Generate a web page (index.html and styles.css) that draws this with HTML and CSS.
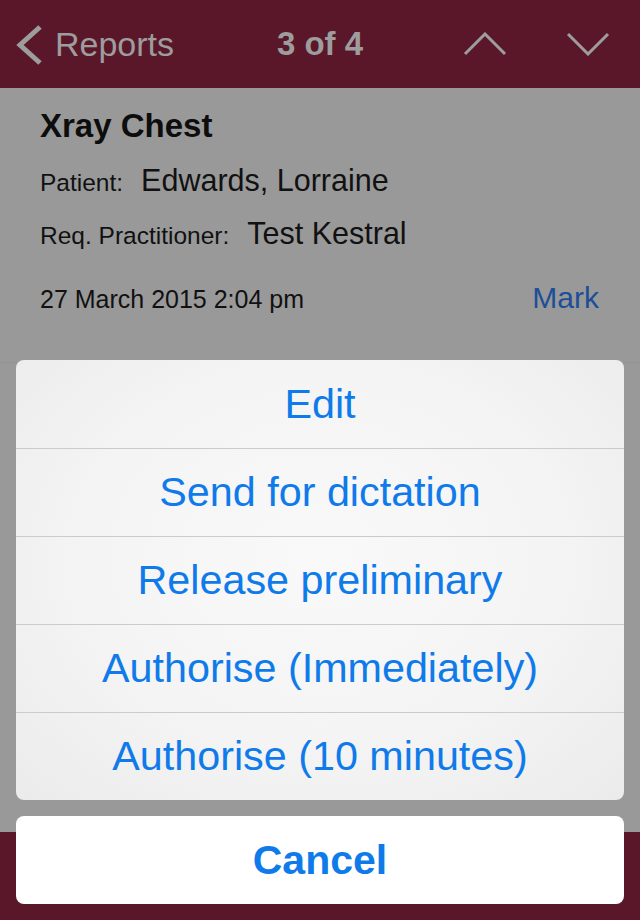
FILE: index.html
```html
<!DOCTYPE html>
<html lang="en">
<head>
    <meta charset="UTF-8">
    <meta name="viewport" content="width=device-width, initial-scale=1.0">
    <title>Reports</title>
    <link rel="stylesheet" href="styles.css">
</head>
<body>
    <div class="screen">
        <header class="navbar">
            <div class="nav-left">
                <svg class="back-icon" width="30" height="42" viewBox="0 0 30 42">
                    <path d="M26 3 L6 21 L26 39" />
                </svg>
                <span class="back-label">Reports</span>
            </div>
            <div class="nav-title">3 of 4</div>
            <div class="nav-right">
                <svg class="arrow" width="44" height="24" viewBox="0 0 44 24">
                    <path d="M2 22 L22 2 L42 22" />
                </svg>
                <svg class="arrow" width="44" height="24" viewBox="0 0 44 24">
                    <path d="M2 2 L22 22 L42 2" />
                </svg>
            </div>
        </header>

        <main class="content">
            <section class="details">
                <h1 class="study">Xray Chest</h1>
                <div class="field first">
                    <span class="label">Patient:</span>
                    <span class="value">Edwards, Lorraine</span>
                </div>
                <div class="field">
                    <span class="label">Req. Practitioner:</span>
                    <span class="value">Test Kestral</span>
                </div>
                <div class="meta">
                    <span class="date">27 March 2015 2:04 pm</span>
                    <span class="mark">Mark</span>
                </div>
            </section>
        </main>

        <footer class="toolbar"></footer>

        <div class="action-sheet">
            <ul class="actions">
                <li>Edit</li>
                <li>Send for dictation</li>
                <li>Release preliminary</li>
                <li>Authorise (Immediately)</li>
                <li>Authorise (10 minutes)</li>
            </ul>
            <button class="cancel">Cancel</button>
        </div>
    </div>
</body>
</html>
```

FILE: styles.css
```css
html, body {
    margin: 0;
    padding: 0;
}

body {
    font-family: "Liberation Sans", Arial, sans-serif;
    background: #999999;
    color: #111;
}

.screen {
    position: relative;
    width: 640px;
    height: 920px;
    display: flex;
    flex-direction: column;
    overflow: hidden;
}

/* top bar */
.navbar {
    height: 88px;
    flex-shrink: 0;
    background: #5a172a;
    display: grid;
    grid-template-columns: 1fr auto 1fr;
    align-items: center;
    color: #9d9d9d;
}

.nav-left {
    display: flex;
    align-items: center;
    padding-left: 14px;
}

.back-icon {
    margin-top: 2px;
}

.back-icon path,
.arrow path {
    fill: none;
    stroke: #9d9d9d;
}

.back-icon path {
    stroke-width: 5;
}

.arrow path {
    stroke-width: 3;
}

.back-label {
    margin-left: 11px;
    font-size: 34px;
}

.nav-title {
    font-size: 33px;
    font-weight: bold;
}

.nav-right {
    display: flex;
    justify-content: flex-end;
    align-items: center;
    gap: 59px;
    padding-right: 30px;
}

/* report body */
.content {
    flex: 1;
    background: #999999;
}

.details {
    box-sizing: border-box;
    height: 275px;
    padding: 18px 41px 0 40px;
    border-bottom: 1px solid #939393;
}

.study {
    margin: 0;
    font-size: 33px;
    line-height: 40px;
    font-weight: bold;
    color: #0d0d0d;
}

.field {
    display: flex;
    align-items: baseline;
    gap: 18px;
    margin-top: 10px;
    line-height: 40px;
}

.field.first {
    margin-top: 14px;
}

.label {
    font-size: 24.5px;
}

.value {
    font-size: 30.5px;
}

.meta {
    display: flex;
    justify-content: space-between;
    align-items: baseline;
    margin-top: 22px;
    line-height: 40px;
}

.date {
    font-size: 25px;
}

.mark {
    font-size: 30px;
    color: #1c4f98;
}

.toolbar {
    height: 88px;
    flex-shrink: 0;
    background: #5a172a;
}

/* action sheet */
.action-sheet {
    position: absolute;
    left: 16px;
    right: 16px;
    bottom: 16px;
    display: flex;
    flex-direction: column;
    gap: 16px;
}

.actions {
    list-style: none;
    margin: 0;
    padding: 0;
    border-radius: 8px;
    overflow: hidden;
    background: radial-gradient(ellipse at 50% 45%, #f9f9f9 0%, #f4f4f4 55%, #ecebeb 100%);
}

.actions li,
.cancel {
    box-sizing: border-box;
    height: 88px;
    display: flex;
    align-items: center;
    justify-content: center;
    font-size: 41.3px;
    color: #0f7bea;
}

.actions li + li {
    border-top: 1px solid #cbcbcb;
}

.cancel {
    width: 100%;
    border: none;
    border-radius: 8px;
    background: #fff;
    font-family: inherit;
    font-size: 41px;
    font-weight: bold;
    padding: 0;
}
```
